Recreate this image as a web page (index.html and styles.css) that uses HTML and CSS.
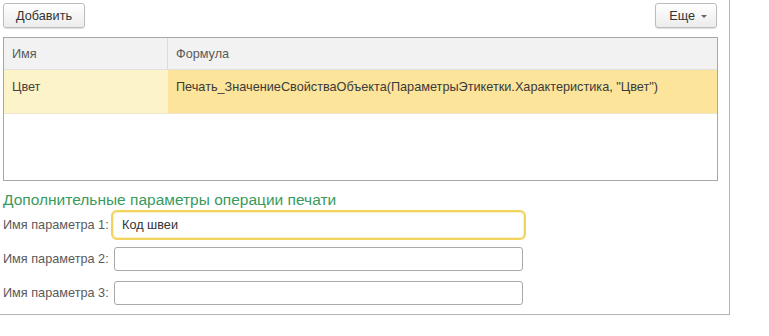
FILE: index.html
```html
<!DOCTYPE html>
<html lang="ru">
<head>
    <meta charset="UTF-8">
    <link rel="stylesheet" href="styles.css">
</head>
<body>
    <div class="panel">
        <div class="toolbar">
            <button class="btn">Добавить</button>
            <button class="btn btn-more">Еще <span class="caret"></span></button>
        </div>

        <div class="grid">
            <div class="grid-head">
                <div class="cell col-name">Имя</div>
                <div class="cell col-formula">Формула</div>
            </div>
            <div class="grid-row selected">
                <div class="cell col-name">Цвет</div>
                <div class="cell col-formula">Печать_ЗначениеСвойстваОбъекта(ПараметрыЭтикетки.Характеристика, "Цвет")</div>
            </div>
        </div>

        <h2 class="group-title">Дополнительные параметры операции печати</h2>

        <div class="field">
            <label class="field-label">Имя параметра 1:</label>
            <input class="field-input focused" type="text" value="Код швеи">
        </div>
        <div class="field">
            <label class="field-label">Имя параметра 2:</label>
            <input class="field-input" type="text">
        </div>
        <div class="field">
            <label class="field-label">Имя параметра 3:</label>
            <input class="field-input" type="text">
        </div>
    </div>
</body>
</html>
```

FILE: styles.css
```css
body {
    margin: 0;
    background: #fff;
    font-family: "Liberation Sans", Arial, sans-serif;
    font-size: 12.7px;
    color: #444;
}
.panel {
    width: 730px;
    border-right: 1px solid #b4b4b4;
    border-bottom: 1px solid #b4b4b4;
    padding: 3px 11px 9px 3px;
    box-sizing: border-box;
}
.toolbar {
    display: flex;
    justify-content: space-between;
    height: 24px;
}
.btn {
    font-family: inherit;
    font-size: 12.7px;
    color: #333;
    height: 25px;
    padding: 0 12px;
    border: 1px solid #bcbcbc;
    border-radius: 3px;
    background: linear-gradient(#ffffff, #ececec);
    box-shadow: 0 1px 1px rgba(0,0,0,0.12);
}
.btn-more {
    margin-right: 1px;
    padding: 0 9px 0 13px;
    display: flex;
    align-items: center;
    gap: 6px;
}
.caret {
    width: 0;
    height: 0;
    border-left: 3px solid transparent;
    border-right: 3px solid transparent;
    border-top: 3px solid #666;
    margin-top: 1px;
}
.grid {
    margin-top: 10px;
    border: 1px solid #a8a8a8;
    height: 144px;
    box-sizing: border-box;
}
.grid-head, .grid-row {
    display: flex;
}
.grid-head {
    height: 31px;
    background: #f2f2f2;
    border-bottom: 1px solid #e0e0e0;
    color: #5a5a5a;
}
.grid-head .cell {
    display: flex;
    align-items: center;
}
.grid-head .col-name {
    border-right: 1px solid #dcdcdc;
}
.cell {
    padding: 0 8px;
    box-sizing: border-box;
}
.col-name {
    width: 164px;
}
.col-formula {
    flex: 1;
}
.grid-row {
    height: 43px;
    border-bottom: 1px solid #eee6c8;
}
.grid-row .cell {
    padding-top: 10px;
}
.selected .col-name {
    background: #fdf3c8;
}
.selected .col-formula {
    background: #fce49b;
    color: #3a3a3a;
}
.group-title {
    margin: 10px 0 4px 0;
    font-size: 15.5px;
    font-weight: normal;
    line-height: 18px;
    color: #3a9a5e;
}
.field {
    display: flex;
    align-items: center;
    height: 24px;
    margin-bottom: 10px;
}
.field:last-child {
    margin-bottom: 0;
}
.field-label {
    width: 111px;
    color: #5a5a5a;
}
.field-input {
    width: 409px;
    height: 24px;
    box-sizing: border-box;
    border: 1px solid #aaa;
    border-radius: 3px;
    padding: 0 7px;
    font-family: inherit;
    font-size: 12.7px;
    color: #333;
}
.field-input.focused {
    outline: 2px solid #f0d45e;
    outline-offset: 1px;
    border-color: #fff;
    box-shadow: 0 0 2px 2px rgba(240,212,94,0.35);
}
```
